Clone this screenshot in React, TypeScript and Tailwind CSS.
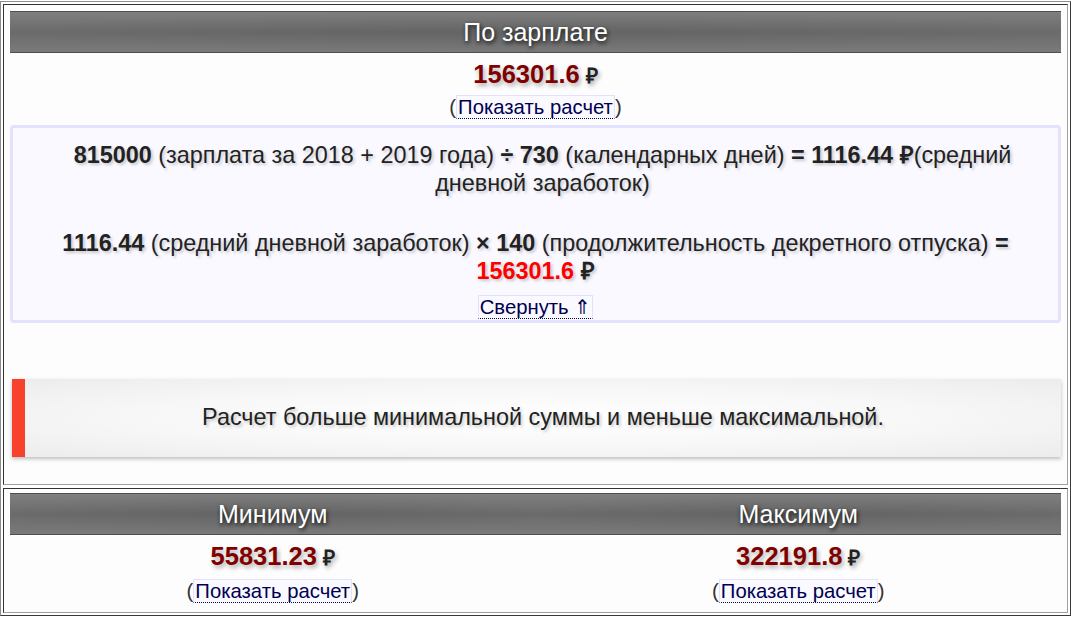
import React from "react";

const shadow = "[text-shadow:2px_2px_3px_rgba(0,0,0,0.2)]";

function Header({ title }: { title: string }) {
  return (
    <div className="flex h-[42px] items-center justify-center border-y border-[#4e4e4e] bg-[radial-gradient(ellipse_at_center,rgba(0,0,0,0.07),rgba(0,0,0,0)_75%),linear-gradient(to_bottom,#7f7f7f_0%,#6b6b6b_50%,#7a7a7a_100%)]">
      <span className="text-[25px] leading-[30px] text-white [text-shadow:1px_2px_4px_rgba(0,0,0,0.9)]">
        {title}
      </span>
    </div>
  );
}

function Amount({ value }: { value: string }) {
  return (
    <div className="mt-[6px] flex h-[30px] items-center justify-center">
      <span className="text-[25.5px] font-bold leading-[30px] text-[#800000] [text-shadow:2px_3px_4px_rgba(0,0,0,0.3)]">
        {value}
      </span>
      <span className="ml-[6px] mt-[3px] text-[21px] font-bold leading-[20px] text-[#222] [text-shadow:2px_3px_4px_rgba(0,0,0,0.3)]">
        ₽
      </span>
    </div>
  );
}

function LinkBox({ children }: { children: React.ReactNode }) {
  return (
    <span className="border border-[#e2e2ff] border-b-[#000050] bg-[#f9f9ff] px-[1px] text-[#000050] [border-bottom-style:dotted]">
      {children}
    </span>
  );
}

function ShowCalc({ className = "" }: { className?: string }) {
  return (
    <div className={`h-[26px] text-center text-[20.3px] leading-[26px] text-[#333] ${className}`}>
      (<LinkBox>Показать расчет</LinkBox>)
    </div>
  );
}

export default function App() {
  return (
    <div
      className="mt-px w-[1071px] border border-t-[#8c8c8c] border-l-[#8c8c8c] border-r-[#3a3a3a] border-b-[#3a3a3a] bg-white p-[2px] text-[#222]"
      style={{ fontFamily: '"Liberation Sans", Arial, sans-serif' }}
    >
      <div className="flex flex-col gap-[3px]">
        {/* по зарплате */}
        <div className="border border-t-[#333] border-l-[#333] border-r-[#a0a0a0] border-b-[#a0a0a0] bg-[#fdfdfd] px-[6px] pb-[27px] pt-[6px]">
          <Header title="По зарплате" />
          <Amount value="156301.6" />
          <ShowCalc className="mt-[5px]" />

          <div className={`mt-[5px] rounded-[4px] border-[3px] border-[#e2e2ff] bg-[#f9f9ff] px-[10px] pt-[13px] text-center text-[23.4px] leading-[28px] ${shadow}`}>
            <p className="pl-[14px]">
              <b>815000</b> (зарплата за 2018 + 2019 года) <b>÷ 730</b> (календарных дней){" "}
              <b>= 1116.44 ₽</b>(средний дневной заработок)
            </p>
            <p className="mt-[32px]">
              <b>1116.44</b> (средний дневной заработок) <b>× 140</b> (продолжительность декретного
              отпуска) <b>=</b> <b className="text-[#ff0000]">156301.6</b> <b>₽</b>
            </p>
            <div className="mt-[9px] h-[26px] text-[20.3px] leading-[26px] [text-shadow:none]">
              <LinkBox>Свернуть ⇑</LinkBox>
            </div>
          </div>

          <div className="ml-[2px] mt-[56px] flex h-[78px] bg-[radial-gradient(ellipse_at_center,#ffffff_0%,#f7f7f7_55%,#ececec_100%)] shadow-[0_2px_4px_rgba(0,0,0,0.25)]">
            <div className="w-[13px] bg-[#f7412d]" />
            <div className={`flex flex-1 items-center justify-center text-[23.4px] ${shadow}`}>
              Расчет больше минимальной суммы и меньше максимальной.
            </div>
          </div>
        </div>

        {/* минимум / максимум */}
        <div className="border border-t-[#333] border-l-[#333] border-r-[#a0a0a0] border-b-[#a0a0a0] bg-[#fdfdfd] px-[6px] pb-[8px] pt-[4px]">
          <div className="grid grid-cols-2">
            <div>
              <Header title="Минимум" />
              <Amount value="55831.23" />
              <ShowCalc className="mt-[7px]" />
            </div>
            <div>
              <Header title="Максимум" />
              <Amount value="322191.8" />
              <ShowCalc className="mt-[7px]" />
            </div>
          </div>
        </div>
      </div>
    </div>
  );
}
